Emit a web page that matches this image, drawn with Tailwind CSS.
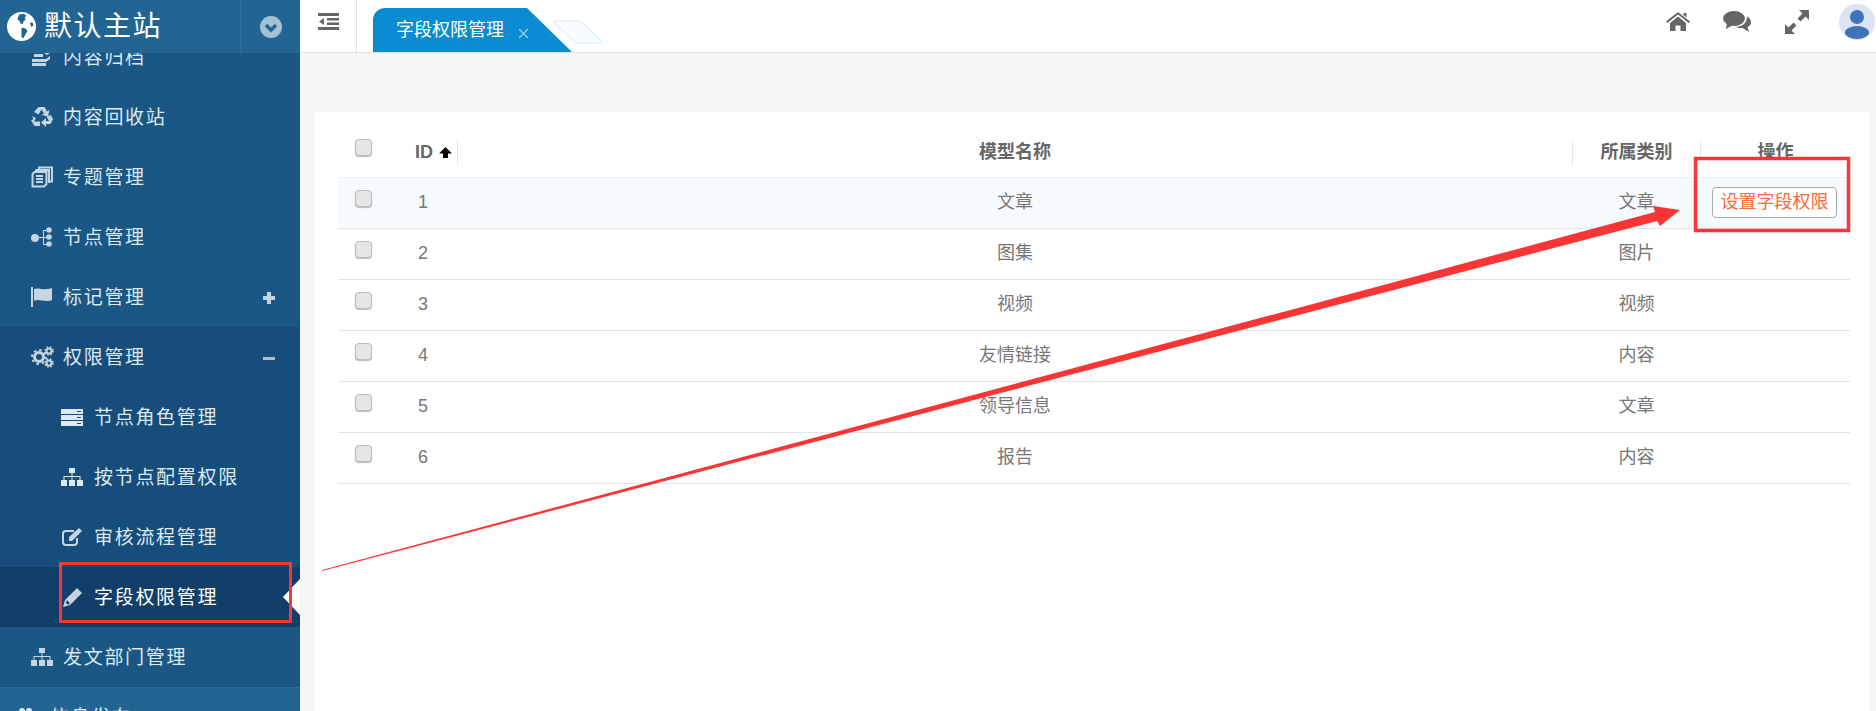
<!DOCTYPE html>
<html lang="en">
<head>
  <meta charset="UTF-8" />
  <title>字段权限管理</title>
  <script src="https://cdn.jsdelivr.net/npm/@tailwindcss/browser@4"></script>
</head>
<body class="relative h-[711px] overflow-hidden bg-[#f6f6f6] font-['Liberation_Sans','Noto_Sans_CJK_SC',sans-serif] text-[#666]">
  <div class="flex h-[711px]">
    <!-- Sidebar -->
    <aside class="flex w-[300px] shrink-0 flex-col overflow-hidden bg-[#1a5785] text-[19px] tracking-[1.7px] text-[#dfe9f1]">
      <div class="relative z-10 flex h-[53px] shrink-0 items-center bg-[#236592]">
        <svg class="ml-[7px] h-[29px] w-[29px]" viewBox="0 0 24 24"><circle cx="12" cy="12" r="12" fill="#fff"/><path d="M10 2 14 1.500 16 3 14.500 5 15.500 6 13.500 8 13 10 11 9.500 10.500 7.500 8.500 6 9.500 4ZM12 13 15 13.500 17 15.500 15.500 18 13.500 22 12 20.500 12 17ZM19 9 21 8.500 22 11 20 12.500Z" fill="#236592"/></svg>
        <span class="ml-2 text-[28px] leading-none tracking-[1.5px] text-white">默认主站</span>
        <div class="ml-auto flex h-full w-[60px] items-center justify-center border-l border-[#2f6f9c]">
          <svg class="h-[22px] w-[22px]" viewBox="0 0 22 22"><circle cx="11" cy="11" r="11" fill="#a3c1d5"/><path d="M6 9 11 14 16 9" fill="none" stroke="#236592" stroke-width="3.400"/></svg>
        </div>
      </div>

      <nav class="-mt-[26px] [&_a>span]:translate-y-px">
        <a class="flex h-[60px] items-center pl-[31px]">
          <svg class="h-[20px] w-[22px] text-[#c5d5e1]" viewBox="0 0 22 20" fill="currentColor"><path d="M1 2H14V5H1ZM16 0 22 4 16 8 13 6 17 4ZM3 7H12V10H3ZM1 12H15L19 9V12L15 15H1ZM1 16H15V19H1Z"/></svg>
          <span class="ml-[10px]">内容归档</span>
        </a>
        <a class="flex h-[60px] items-center pl-[31px]">
          <svg class="h-[22px] w-[22px] text-[#c5d5e1]" viewBox="0 0 22 22" fill="currentColor">
            <path id="recycleArm" d="M7.500 1H13.500L16 5.500 18.500 4 17 10.500 10.500 9 13 7.500 10.500 3.500 7.500 8.500 3 6Z"/>
            <path d="M19 7.500 22 13 19.500 18H15V21L10 16.500 15 12V15H18L15.500 10.500 20 9Z"/>
            <path d="M1 10 5 12 3 15.500 9 15.500V20H3.500L0.500 15 0 14.500 2.500 13Z"/>
          </svg>
          <span class="ml-[10px]">内容回收站</span>
        </a>
        <a class="flex h-[60px] items-center pl-[31px]">
          <svg class="h-[22px] w-[22px] text-[#c5d5e1]" viewBox="0 0 22 22" fill="none" stroke="currentColor" stroke-width="2"><path d="M8 3V1.500H21V15.500H18.500"/><path d="M5 3.500V4H18V17"/><path d="M3.500 6H15.500V18L13 20.500H1.500V8Z" fill="#1a5785"/><path d="M5 10H12M5 13H12M5 16H12"/></svg>
          <span class="ml-[10px]">专题管理</span>
        </a>
        <a class="flex h-[60px] items-center pl-[31px]">
          <svg class="h-[20px] w-[22px] text-[#c5d5e1]" viewBox="0 0 22 20" fill="currentColor"><circle cx="4" cy="11" r="4"/><circle cx="18" cy="3" r="2.800"/><circle cx="18" cy="10" r="2.800"/><circle cx="18" cy="17" r="2.800"/><path d="M6 10H18V11H6ZM12 3H18V4H13V17H18V18H12Z"/></svg>
          <span class="ml-[10px]">节点管理</span>
        </a>
        <a class="flex h-[60px] items-center pl-[31px] pr-[25px]">
          <svg class="h-[20px] w-[22px] text-[#c5d5e1]" viewBox="0 0 22 20" fill="currentColor"><path d="M0 0H2V20H0ZM3 2C8 0 12 4 21 1V13C13 16 8 11 3 14Z"/></svg>
          <span class="ml-[10px]">标记管理</span>
          <span class="ml-auto h-[12px] w-[12px] bg-[linear-gradient(#c5d5e1,#c5d5e1),linear-gradient(#c5d5e1,#c5d5e1)] bg-[length:12px_4px,4px_12px] bg-center bg-no-repeat"></span>
        </a>
        <div class="bg-[#164d7a]">
          <a class="flex h-[60px] items-center pl-[31px] pr-[25px]">
            <svg class="h-[22px] w-[23px] text-[#c5d5e1]" viewBox="0 0 23 22" fill="none" stroke="currentColor"><circle cx="8" cy="11" r="4.500" stroke-width="3"/><circle cx="8" cy="11" r="7" stroke-width="2" stroke-dasharray="2.500 3"/><circle cx="18" cy="5" r="2.500" stroke-width="2"/><circle cx="18" cy="5" r="4" stroke-width="1.600" stroke-dasharray="1.600 1.600"/><circle cx="18" cy="17" r="2.500" stroke-width="2"/><circle cx="18" cy="17" r="4" stroke-width="1.600" stroke-dasharray="1.600 1.600"/></svg>
            <span class="ml-[9px]">权限管理</span>
            <span class="ml-auto h-[3px] w-[12px] bg-[#a9c0d2]"></span>
          </a>
          <a class="flex h-[60px] items-center pl-[61px]">
            <svg class="h-[17px] w-[22px] text-[#dfe9f1]" viewBox="0 0 22 17" fill="currentColor"><path fill-rule="evenodd" d="M0 0H22V5H0ZM16 2V3H20V2ZM0 6H22V11H0ZM16 8V9H20V8ZM0 12H22V17H0ZM16 14V15H20V14Z"/></svg>
            <span class="ml-[11px]">节点角色管理</span>
          </a>
          <a class="flex h-[60px] items-center pl-[61px]">
            <svg class="h-[18px] w-[22px] text-[#dfe9f1]" viewBox="0 0 22 18" fill="currentColor"><path d="M8 0H14V5H8ZM0 12H6V18H0ZM8 12H14V18H8ZM16 12H22V18H16ZM10.500 5H11.500V8H19.500V12H18.500V9H11.500V12H10.500V9H3.500V12H2.500V8H10.500Z"/></svg>
            <span class="ml-[11px]">按节点配置权限</span>
          </a>
          <a class="flex h-[60px] items-center pl-[61px]">
            <svg class="h-[20px] w-[22px] text-[#c5d5e1]" viewBox="0 0 22 20" fill="none" stroke="currentColor" stroke-width="2"><path d="M13 4H5C3 4 2 5 2 7V15C2 17 3 18 5 18H13C15 18 16 17 16 15V11"/><path d="M8 10 18 1 21 4 11 14H8Z" fill="currentColor" stroke="none"/></svg>
            <span class="ml-[11px]">审核流程管理</span>
          </a>
          <a class="relative flex h-[60px] items-center bg-[#123f69] pl-[63px] text-white">
            <svg class="h-[19px] w-[19px] text-[#c5d5e1]" viewBox="0 0 19 19" fill="currentColor"><path d="M14 0 19 5 7 17 0 19 2 12ZM4 12 3 15 4.500 16.500 7 15.500Z" fill-rule="evenodd"/></svg>
            <span class="ml-[12px]">字段权限管理</span>
            <span class="absolute right-0 top-[11px] h-0 w-0 border-y-[18px] border-r-[17px] border-y-transparent border-r-white"></span>
          </a>
        </div>
        <a class="flex h-[60px] items-center pl-[31px]">
          <svg class="h-[18px] w-[22px] text-[#c5d5e1]" viewBox="0 0 22 18" fill="currentColor"><path d="M8 0H14V5H8ZM0 12H6V18H0ZM8 12H14V18H8ZM16 12H22V18H16ZM10.500 5H11.500V8H19.500V12H18.500V9H11.500V12H10.500V9H3.500V12H2.500V8H10.500Z"/></svg>
          <span class="ml-[10px]">发文部门管理</span>
        </a>
        <a class="flex h-[60px] items-center border-t border-[#2a6c99] bg-[#236592] pl-[18px]">
          <svg class="h-[20px] w-[22px] text-[#dfe9f1]" viewBox="0 0 22 20" fill="currentColor"><circle cx="4" cy="3" r="3"/><circle cx="11" cy="3" r="3"/><path d="M0 8H15V18H0Z"/></svg>
          <span class="ml-[10px]">信息发布</span>
        </a>
      </nav>
    </aside>

    <div class="flex min-w-0 flex-1 flex-col">
      <!-- Top bar -->
      <header class="flex h-[53px] shrink-0 border-b border-[#e2e2e2] bg-white">
        <div class="flex w-[57px] shrink-0 justify-center border-r border-[#e2e2e2] pt-[13px]">
          <svg class="h-[17px] w-[21px] text-[#666]" viewBox="0 0 21 17" fill="currentColor"><path d="M0 0H21V3H0ZM9 5H21V7.500H9ZM9 9.500H21V12H9ZM0 14H21V17H0ZM6 5V12L1 8.500Z"/></svg>
        </div>
        <div class="relative ml-[16px] mt-2 flex w-[199px] items-center">
          <div class="flex h-[44px] w-[199px] items-center rounded-tl-xl bg-[#0a8cd2] pl-[23px] text-[18px] text-white [clip-path:polygon(0_0,154px_0,199px_100%,0_100%)]">
            字段权限管理
            <svg class="ml-[15px] mt-[6px] h-[9px] w-[9px] text-[#a9d8f2]" viewBox="0 0 9 9" fill="none" stroke="currentColor" stroke-width="1.200"><path d="M0 0 9 9M9 0 0 9"/></svg>
          </div>
        </div>
        <svg class="-ml-[20px] mt-5 h-[24px] w-[52px]" viewBox="0 0 52 24"><path d="M3 1H27C28 1 29 1.500 30 2.500L49 21C50 22 50 23 48.500 23H25C24 23 23 22.500 22 21.500L2 2.500C1 1.500 2 1 3 1Z" fill="#f9fdff" stroke="#dff3fb" stroke-width="1.500"/></svg>
        <div class="ml-auto flex items-center pb-[9px] pr-px">
          <svg class="h-[19px] w-[24px] text-[#666]" viewBox="0 0 24 19" fill="currentColor"><path d="M12 0 24 9.500 22.700 11 12 2.500 1.300 11 0 9.500ZM12 4.500 20 11V19H14.500V13.500H9.500V19H4V11ZM17.500 1H20.500V5.500L17.500 3Z"/></svg>
          <svg class="ml-[33px] h-[21px] w-[28px] text-[#666]" viewBox="0 0 28 21" fill="currentColor"><ellipse cx="11" cy="7.500" rx="11" ry="7.500"/><path d="M4 11 3 18 10 14Z"/><path d="M24 5.500C27 7 28 9 28 11.500C28 13.500 26.500 15 24.500 16L26 21 19.500 17C16.500 17 14 16.500 12 16C18.500 16 24 12.500 24 5.500Z"/></svg>
          <svg class="ml-[34px] h-[24px] w-[24px] text-[#666]" viewBox="0 0 24 24" fill="currentColor"><path d="M14 0H24V10L20.500 6.500 15.500 11.500 12.500 8.500 17.500 3.500ZM0 24V14L3.500 17.500 8.500 12.500 11.500 15.500 6.500 20.500 10 24Z"/></svg>
          <div class="relative ml-[30px] h-[36px] w-[36px] overflow-hidden rounded-full bg-[#dbe4f3]">
            <span class="absolute left-[11px] top-[6px] h-[14px] w-[14px] rounded-full bg-[#3f72bb]"></span>
            <span class="absolute left-[6px] top-[22px] h-[13px] w-[24px] rounded-[50%] bg-[#3f72bb]"></span>
          </div>
        </div>
      </header>

      <!-- Table panel -->
      <main class="ml-[15px] mr-[7px] mt-[59px] flex-1 bg-white pl-[23px] pr-[19px] pt-[16px]">
        <table class="w-full table-fixed border-collapse text-center text-[18px]">
          <colgroup>
            <col class="w-[60px]" /><col class="w-[60px]" /><col /><col class="w-[129px]" /><col class="w-[149px]" />
          </colgroup>
          <thead>
            <tr class="h-[49px] border-b border-[#edf1f4] font-bold">
              <th class="pb-[7px] pr-[9px]"><span class="mx-auto -mt-[2px] block h-[17px] w-[17px] rounded-[4px] border border-[#bbb] bg-[#e6e6e6] shadow-[0_1px_1px_#bbb]"></span></th>
              <th class="pl-[17px] text-left">
                <div class="flex h-[25px] items-center border-r border-[#e6e6e6]">
                  ID
                  <svg class="ml-[6px] h-[11px] w-[13px] text-black" viewBox="0 0 13 11" fill="currentColor"><path d="M6.500 0 13 6.500H9V11H4V6.500H0Z"/></svg>
                </div>
              </th>
              <th>模型名称</th>
              <th><div class="flex h-[25px] items-center justify-center border-x border-[#e6e6e6]">所属类别</div></th>
              <th>操作</th>
            </tr>
          </thead>
          <tbody id="rows" class="text-[#777]"></tbody>
        </table>
      </main>
    </div>
  </div>

  <!-- Red annotations drawn on top of the screenshot -->
  <svg class="pointer-events-none absolute left-0 top-0 h-[711px] w-[1876px]" viewBox="0 0 1876 711" fill="none">
    <rect x="60.500" y="563.500" width="230" height="58" stroke="#f93535" stroke-width="3"/>
    <rect x="1695.500" y="158.500" width="153" height="72" stroke="#f93535" stroke-width="3.500"/>
    <path d="M322 570 1655 212 1653 206 1680 210 1660 226 1657 221 322 571Z" fill="#f93535"/>
  </svg>

  <script>
    const rows = [
      [1, '文章', '文章'],
      [2, '图集', '图片'],
      [3, '视频', '视频'],
      [4, '友情链接', '内容'],
      [5, '领导信息', '文章'],
      [6, '报告', '内容'],
    ];

    document.getElementById('rows').innerHTML = rows.map((row, i) => `
      <tr class="h-[51px] border-b border-[#e4e4e4] ${i === 0 ? 'bg-[#f6fafd]' : ''}">
        <td class="pb-[9px] pr-[9px]"><span class="mx-auto block h-[17px] w-[17px] rounded-[4px] border border-[#bbb] bg-[#e6e6e6] shadow-[0_1px_1px_#bbb]"></span></td>
        <td class="pl-[20px] text-left">${row[0]}</td>
        <td>${row[1]}</td>
        <td>${row[2]}</td>
        <td>${i === 0 ? '<button class="h-[31px] w-[125px] -translate-x-px rounded-[4px] border border-[#aaa] bg-white text-[#fa6a3c]">设置字段权限</button>' : ''}</td>
      </tr>`).join('');
  </script>
</body>
</html>
